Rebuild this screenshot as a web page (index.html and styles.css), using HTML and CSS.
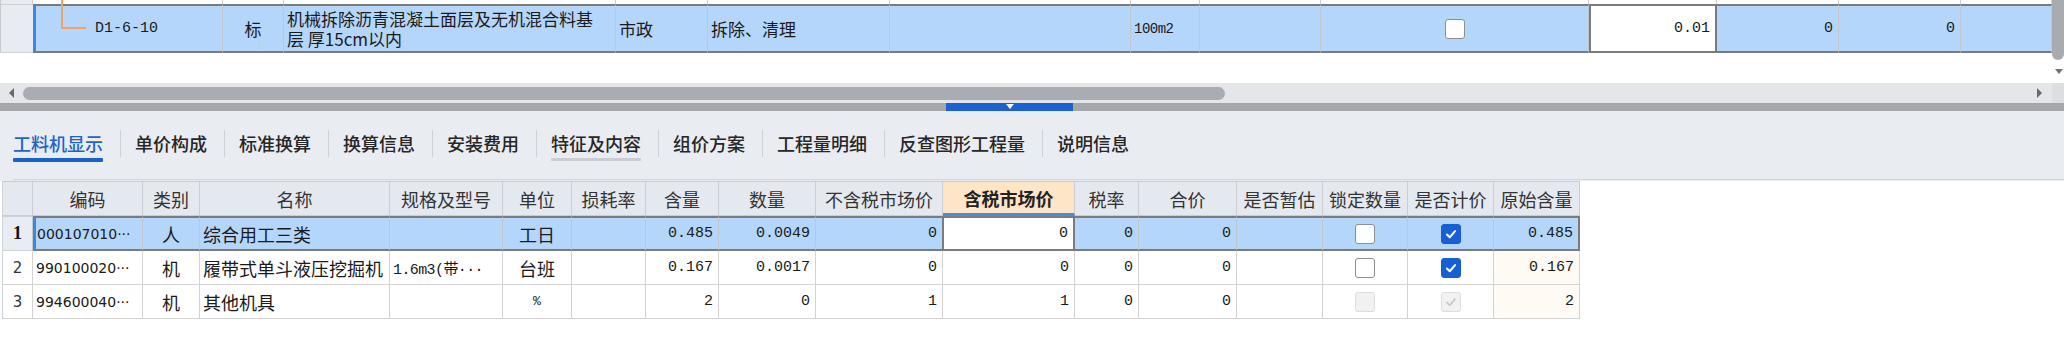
FILE: index.html
```html
<!DOCTYPE html>
<html>
<head>
<meta charset="utf-8">
<link rel="stylesheet" href="styles.css">
</head>
<body>
<div class="top">
  <div class="sheet">
    <span class="tree"></span>
    <div class="trow prev">
      <div class="rh"></div><div></div><div></div><div></div><div></div><div></div><div></div><div></div><div></div><div></div><div></div><div></div><div></div><div></div>
    </div>
    <div class="trow sel">
      <div class="rh"></div>
      <div class="code">D1-6-10</div>
      <div class="center">标</div>
      <div class="name"><span class="l1">机械拆除沥青混凝土面层及无机混合料基</span><span class="l2">层 厚15cm以内</span></div>
      <div>市政</div>
      <div>拆除、清理</div>
      <div></div>
      <div class="mono">100m2</div>
      <div></div>
      <div class="center"><span class="cb"></span></div>
      <div class="num edit">0.01</div>
      <div class="num">0</div>
      <div class="num">0</div>
      <div></div>
    </div>
  </div>
  <div class="vscroll"><div class="vthumb"></div><div class="vdown"></div></div>
</div>
<div class="hscroll">
  <div class="htrack">
    <span class="arr-l"></span>
    <div class="hthumb"></div>
    <span class="arr-r"></span>
  </div>
  <div class="corner"></div>
</div>
<div class="splitter"><div class="handle"><span class="tri"></span></div></div>
<div class="tabbar">
  <div class="tabs">
    <div class="tab active">工料机显示<i></i></div>
    <span class="sep"></span>
    <div class="tab">单价构成<i></i></div>
    <span class="sep"></span>
    <div class="tab">标准换算<i></i></div>
    <span class="sep"></span>
    <div class="tab">换算信息<i></i></div>
    <span class="sep"></span>
    <div class="tab">安装费用<i></i></div>
    <span class="sep"></span>
    <div class="tab hover">特征及内容<i></i></div>
    <span class="sep"></span>
    <div class="tab">组价方案<i></i></div>
    <span class="sep"></span>
    <div class="tab">工程量明细<i></i></div>
    <span class="sep"></span>
    <div class="tab">反查图形工程量<i></i></div>
    <span class="sep"></span>
    <div class="tab">说明信息<i></i></div>
  </div>
</div>
<div class="bottom">
  <div class="grid">
    <div class="brow head">
      <div class="rh"></div>
      <div>编码</div><div>类别</div><div>名称</div><div>规格及型号</div><div>单位</div><div>损耗率</div><div>含量</div><div>数量</div><div>不含税市场价</div><div class="hl">含税市场价</div><div>税率</div><div>合价</div><div>是否暂估</div><div>锁定数量</div><div>是否计价</div><div>原始含量</div>
    </div>
    <div class="brow sel">
      <div class="rh first">1</div>
      <div class="code">000107010···</div>
      <div class="center">人</div>
      <div class="left">综合用工三类</div>
      <div></div>
      <div class="center">工日</div>
      <div></div>
      <div class="num">0.485</div>
      <div class="num">0.0049</div>
      <div class="num">0</div>
      <div class="num edit">0</div>
      <div class="num">0</div>
      <div class="num">0</div>
      <div></div>
      <div class="center"><span class="cb"></span></div>
      <div class="center"><span class="cb on"><svg viewBox="0 0 20 20" width="20" height="20"><path d="M5.5 10.5 L8.6 13.6 L14.5 6.8" fill="none" stroke="#fff" stroke-width="2.2" stroke-linecap="round" stroke-linejoin="round"/></svg></span></div>
      <div class="num">0.485</div>
    </div>
    <div class="brow">
      <div class="rh">2</div>
      <div class="code">990100020···</div>
      <div class="center">机</div>
      <div class="left">履带式单斗液压挖掘机</div>
      <div class="left spec">1.6m3(带···</div>
      <div class="center">台班</div>
      <div></div>
      <div class="num">0.167</div>
      <div class="num">0.0017</div>
      <div class="num">0</div>
      <div class="num">0</div>
      <div class="num">0</div>
      <div class="num">0</div>
      <div></div>
      <div class="center"><span class="cb"></span></div>
      <div class="center"><span class="cb on"><svg viewBox="0 0 20 20" width="20" height="20"><path d="M5.5 10.5 L8.6 13.6 L14.5 6.8" fill="none" stroke="#fff" stroke-width="2.2" stroke-linecap="round" stroke-linejoin="round"/></svg></span></div>
      <div class="num orig">0.167</div>
    </div>
    <div class="brow">
      <div class="rh">3</div>
      <div class="code">994600040···</div>
      <div class="center">机</div>
      <div class="left">其他机具</div>
      <div></div>
      <div class="center pct">%</div>
      <div></div>
      <div class="num">2</div>
      <div class="num">0</div>
      <div class="num">1</div>
      <div class="num">1</div>
      <div class="num">0</div>
      <div class="num">0</div>
      <div></div>
      <div class="center"><span class="cb dis"></span></div>
      <div class="center"><span class="cb dis"><svg viewBox="0 0 20 20" width="20" height="20"><path d="M5.5 10.5 L8.6 13.6 L14.5 6.8" fill="none" stroke="#c4c4c4" stroke-width="1.8" stroke-linecap="round" stroke-linejoin="round"/></svg></span></div>
      <div class="num orig">2</div>
    </div>
  </div>
</div>
</body>
</html>
```
FILE: styles.css
```css
* { box-sizing: border-box; }
html, body { margin: 0; padding: 0; }
body {
  width: 2064px;
  height: 363px;
  overflow: hidden;
  background: #ffffff;
  font-family: "Noto Sans CJK SC", "Noto Sans", sans-serif;
  color: #1a1a1a;
}

/* ---------- top sheet ---------- */
.top { display: flex; height: 83px; }
.sheet { flex: 1; position: relative; }
.tree {
  position: absolute;
  left: 61px;
  top: 0;
  width: 25px;
  height: 29px;
  border-left: 2px solid #f5a25a;
  border-bottom: 2px solid #f5a25a;
  z-index: 2;
}
.trow {
  display: grid;
  grid-template-columns: 33px 190px 61px 332px 92px 182px 241px 69px 121px 268px 128px 122px 122px 91px;
}
.trow.prev { height: 4px; }
.trow.prev > div { border-right: 1px solid #cfcfcf; }
.trow.prev > .rh { background: #e8ecf2; border-left: 1px solid #c7cbd0; }
.trow.sel { height: 49px; background: #b5d6fb; }
.trow.sel > div {
  border-top: 2px solid #7b7b7b;
  border-bottom: 2px solid #7b7b7b;
  border-right: 1px solid #c2c7ce;
  display: flex;
  align-items: center;
  padding: 0 3px;
  font-size: 17px;
  white-space: nowrap;
  overflow: hidden;
}
.trow.sel > .rh {
  background: #e8ecf2;
  border-top: 1px solid #cdd1d6;
  border-bottom: 1px solid #cdd1d6;
  border-left: 1px solid #c7cbd0;
  border-right: 0;
}
.trow.sel > .code {
  border-left: 3px solid #3b88e4;
  padding-left: 59px;
  font-family: "Liberation Mono", monospace;
  font-size: 15px;
}
.trow.sel > .name {
  flex-direction: column;
  align-items: flex-start;
  justify-content: center;
}
.trow.sel .name span { display: block; line-height: 20px; height: 20px; }
.trow.sel > .center { justify-content: center; }
.trow.sel > .mono { font-family: "Liberation Mono", monospace; font-size: 14px; letter-spacing: -0.5px; }
.trow.sel > .num {
  justify-content: flex-end;
  padding-right: 5px;
  font-family: "Liberation Mono", monospace;
  font-size: 15px;
}
.trow.sel > .edit {
  background: #ffffff;
  border-left: 2px solid #7b7b7b;
  border-right: 2px solid #7b7b7b;
}

.vscroll { width: 12px; position: relative; background: #ffffff; }
.vthumb {
  width: 12px;
  height: 60px;
  background: #a8abb0;
  border-radius: 0 0 6px 6px;
}
.vdown {
  margin: 9px 0 0 3px;
  width: 0; height: 0;
  border-left: 4px solid transparent;
  border-right: 4px solid transparent;
  border-top: 5px solid #6f7277;
}

/* ---------- scrollbar / splitter ---------- */
.hscroll { display: flex; height: 20px; }
.htrack {
  flex: 1;
  background: #e4e6e9;
  display: flex;
  align-items: center;
  padding: 0 10px 0 9px;
}
.arr-l {
  width: 0; height: 0;
  border-top: 5px solid transparent;
  border-bottom: 5px solid transparent;
  border-right: 5px solid #66696e;
}
.hthumb {
  margin-left: 9px;
  width: 1202px;
  height: 13px;
  border-radius: 7px;
  background: #a9acb0;
}
.arr-r {
  margin-left: auto;
  width: 0; height: 0;
  border-top: 5px solid transparent;
  border-bottom: 5px solid transparent;
  border-left: 5px solid #66696e;
}
.corner { width: 12px; background: #dcdee1; }

.splitter { height: 8px; background: #a5a7aa; }
.handle {
  margin-left: 946px;
  width: 127px;
  height: 8px;
  background: #1a62d4;
  display: flex;
  justify-content: center;
}
.tri {
  margin-top: 1px;
  width: 0; height: 0;
  border-left: 4px solid transparent;
  border-right: 4px solid transparent;
  border-top: 5px solid #ffffff;
}

/* ---------- tabs ---------- */
.tabbar {
  height: 70px;
  background: #e9ecf0;
  padding: 20px 0 0 0;
}
.tabs {
  display: flex;
  align-items: flex-start;
  height: 49px;
  margin-left: 13px;
  border-bottom: 1px solid #d2d6dc;
}
.tab {
  display: flex;
  flex-direction: column;
  align-items: stretch;
  font-size: 18px;
  font-weight: 500;
  line-height: 24px;
  color: #262626;
  padding: 0 17px 0 14px;
  white-space: nowrap;
}
.tab:first-child { padding-left: 0; }
.tab i {
  display: block;
  height: 4px;
  margin-top: 3px;
  border-radius: 1px;
}
.tab.active { color: #1b62d4; }
.tab.active i { background: #1560d3; }
.tab.hover i { background: #c9ced6; height: 3px; }
.sep {
  width: 1px;
  height: 27px;
  margin-top: -1px;
  background: #cdd1d7;
}

/* ---------- bottom grid ---------- */
.bottom { padding-left: 2px; }
.brow {
  display: grid;
  grid-template-columns: 31px 110px 57px 190px 113px 69px 74px 73px 97px 127px 132px 64px 98px 86px 85px 86px 86px;
  width: 1578px;
  height: 34px;
}
.brow > div {
  border-right: 1px solid #d3d3d3;
  border-bottom: 1px solid #d3d3d3;
  display: flex;
  align-items: center;
  padding: 0 3px;
  font-size: 18px;
  white-space: nowrap;
  overflow: hidden;
}
.brow > div:first-child { border-left: 1px solid #cfd2d6; }
.brow.head { height: 35px; background: #e4e9f0; }
.brow.head > div {
  justify-content: center;
  color: #333333;
  border-right: 1px solid #c9cdd3;
  border-bottom: 1px solid #c9cdd3;
  border-top: 1px solid #c9cdd3;
}
.brow.head > .hl {
  background: #fde5c6;
  font-weight: 700;
  color: #222;
  border-bottom: 3px solid #3d8fe8;
}
.brow .rh {
  justify-content: center;
  font-family: "DejaVu Sans", sans-serif;
  font-size: 15px;
  color: #333;
}
.brow .rh.first {
  background: #e8ecf3;
  font-family: "Liberation Serif", serif;
  font-weight: 700;
  font-size: 18px;
  color: #111;
}
.brow .code {
  font-family: "DejaVu Sans", sans-serif;
  font-size: 14px;
  padding-left: 3px;
  color: #1a1a1a;
}
.brow .center { justify-content: center; }
.brow .left { justify-content: flex-start; }
.brow .spec { font-family: "Liberation Mono", "Noto Sans CJK SC", monospace; font-size: 15px; letter-spacing: -0.6px; }
.brow .pct { font-family: "Liberation Mono", monospace; font-size: 13px; }
.brow .num {
  justify-content: flex-end;
  padding-right: 5px;
  font-family: "Liberation Mono", monospace;
  font-size: 15px;
}
.brow .orig { background: #fffaf4; }
.brow.sel { background: #b5d6fb; height: 35px; }
.brow.sel > div {
  border-top: 2px solid #7b7b7b;
  border-bottom: 2px solid #7b7b7b;
  border-right-color: #c2c7ce;
}
.brow.sel > .rh.first { border-top: 1px solid #cfd2d6; border-bottom: 1px solid #cfd2d6; }
.brow.sel > .code { border-left: 3px solid #3b88e4; padding-left: 1px; }
.brow.sel > div:last-child { border-right: 2px solid #7b7b7b; }
.brow.sel > .edit {
  background: #ffffff;
  border-left: 2px solid #7b7b7b;
  border-right: 2px solid #7b7b7b;
  margin-left: -1px;
}

/* checkboxes */
.cb {
  display: inline-flex;
  width: 20px;
  height: 20px;
  border: 1px solid #8d8f93;
  border-radius: 3px;
  background: #ffffff;
  align-items: center;
  justify-content: center;
}
.cb svg { display: block; width: 18px; height: 18px; }
.cb.on { background: #1560d8; border-color: #1560d8; }
.cb.dis { background: #f1f1f1; border-color: #dddddd; }
```
